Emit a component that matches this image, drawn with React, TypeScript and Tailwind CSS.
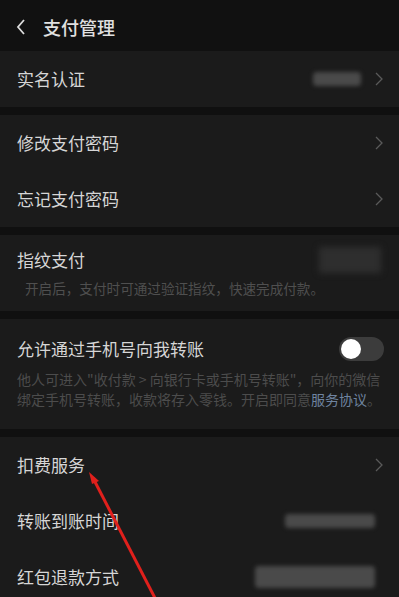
import React from 'react';

const font = { fontFamily: '"Noto Sans CJK SC", "Noto Sans", sans-serif' };

const Chevron: React.FC<{ className?: string }> = ({ className }) => (
  <svg width="8" height="14" viewBox="0 0 8 14" className={className}>
    <path d="M1 1l6 6-6 6" fill="none" stroke="currentColor" strokeWidth="1.3" />
  </svg>
);

const Blur: React.FC<{ w: string }> = ({ w }) => (
  <div className={`h-[14px] ${w} bg-[#4a4a4a] blur-[2px] rounded-sm`} />
);

const Row: React.FC<{ label: string; right?: React.ReactNode; chevron?: boolean }> = ({ label, right, chevron }) => (
  <div className="flex items-center h-[56px] pl-[17px] pr-[16px]">
    <span className="flex-1 text-[17px] text-[#d6d6d6]">{label}</span>
    {right}
    {chevron && <Chevron className="text-[#5a5a5a] ml-2" />}
  </div>
);

const Gap: React.FC = () => <div className="h-[8px] bg-[#101010]" />;

export default function App() {
  return (
    <div className="relative w-[399px] h-[597px] overflow-hidden bg-[#1b1b1b]" style={font}>
      <div className="flex items-center h-[51px] bg-[#111111] pl-[16px] pt-[3px]">
        <svg width="10" height="16" viewBox="0 0 10 16" className="text-[#dcdcdc]">
          <path d="M8 1L2 8l6 7" fill="none" stroke="currentColor" strokeWidth="1.8" />
        </svg>
        <span className="ml-[17px] text-[18px] text-[#e0e0e0] font-medium">支付管理</span>
      </div>

      <Row label="实名认证" right={<Blur w="w-[48px] mr-[6px]" />} chevron />
      <Gap />
      <Row label="修改支付密码" chevron />
      <Row label="忘记支付密码" chevron />
      <Gap />
      <div className="pl-[17px] pr-[16px] pt-[12px] pb-[13px]">
        <div className="flex items-center">
          <span className="flex-1 text-[17px] text-[#d6d6d6]">指纹支付</span>
          <div className="w-[62px] h-[26px] bg-[#2e2e2e] blur-[3px] mr-[2px]" />
        </div>
        <div className="mt-[5px] pl-[8px] text-[13.6px] text-[#4f4f4f]">开启后，支付时可通过验证指纹，快速完成付款。</div>
      </div>
      <Gap />
      <div className="pl-[17px] pr-[12px] pt-[17px] pb-[20px]">
        <div className="flex items-center">
          <span className="flex-1 text-[17px] text-[#d6d6d6]">允许通过手机号向我转账</span>
          <div className="relative w-[45px] h-[24px] rounded-full bg-[#3c3c3c] mr-[3px]">
            <div className="absolute left-[2px] top-[2px] w-[20px] h-[20px] rounded-full bg-white" />
          </div>
        </div>
        <div className="mt-[7px] text-[14px] leading-[20px] text-[#4c4c4c] whitespace-nowrap">
          <div>他人可进入"收付款 &gt; 向银行卡或手机号转账"，向你的微信</div>
          <div>绑定手机号转账，收款将存入零钱。开启即同意<span className="text-[#6f84a0]">服务协议</span>。</div>
        </div>
      </div>
      <Gap />
      <Row label="扣费服务" chevron />
      <Row label="转账到账时间" right={<Blur w="w-[90px] mr-[8px]" />} />
      <Row label="红包退款方式" right={<Blur w="w-[120px] h-[22px] mr-[8px]" />} />

      <svg className="absolute left-0 top-0 pointer-events-none" width="399" height="597">
        <line x1="93" y1="478" x2="156" y2="600" stroke="#e0201c" strokeWidth="3" />
        <path d="M89 472 L99 481 L92 484 Z" fill="#e0201c" />
      </svg>
    </div>
  );
}
